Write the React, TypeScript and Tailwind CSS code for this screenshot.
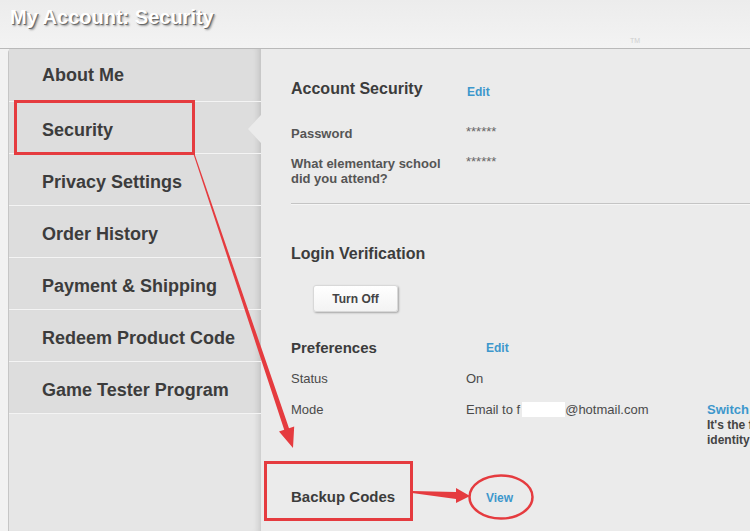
const font = "font-['Liberation_Sans',Arial,sans-serif]";

const menu = [
  "About Me",
  "Security",
  "Privacy Settings",
  "Order History",
  "Payment & Shipping",
  "Redeem Product Code",
  "Game Tester Program",
];

const Annotations = () => (
  <svg className="pointer-events-none absolute inset-0" width="750" height="531" viewBox="0 0 750 531">
    <g fill="none" stroke="#e53b3f" strokeWidth="3">
      <rect x="15.5" y="101.5" width="178" height="52" />
      <rect x="265.5" y="462.5" width="146" height="57" />
    </g>
    <ellipse cx="501" cy="497" rx="31.5" ry="21.5" fill="none" stroke="#e53b3f" strokeWidth="2.5" />
    <polygon
      fill="#e53b3f"
      points="194.5,153.8 289,428.2 294.2,426.4 293,448 279,431.6 284.2,429.8 193.5,154.2"
    />
    <polygon fill="#e53b3f" points="412,491 456,492 456,488 470,496 456,503 456,499 412,493" />
  </svg>
);

const App = () => {
  return (
    <div className={`${font} relative w-[750px] h-[531px] overflow-hidden bg-[#f2f2f2]`}>
      {/* header */}
      <div className="relative h-[48px] bg-gradient-to-b from-[#ececec] to-[#f3f3f3]">
        <h1 className="pl-[10px] pt-[5px] text-[20px] font-bold leading-[24px] text-white [text-shadow:1px_1px_0_#6b6b6b,2px_2px_2px_#9a9a9a]">
          My Account: Security
        </h1>
        <span className="absolute left-[630px] top-[36px] text-[7px] text-[#cfcfcf]">TM</span>
      </div>

      <div className="flex h-[483px] border-t border-[#b9b9b9]">
        {/* sidebar */}
        <div className="ml-[8px] flex w-[253px] shrink-0 flex-col rounded-tl-[4px] border-l border-[#c6c6c6] bg-[#e6e6e6] shadow-[inset_-7px_0_6px_-5px_rgba(0,0,0,0.14)]">
          {menu.map((item, i) => (
            <div
              key={item}
              className={`relative flex items-center whitespace-nowrap border-b border-[#f4f4f4] bg-[#dddddd] pl-[33px] text-[18px] font-bold text-[#3c3c3c] shadow-[inset_-7px_0_6px_-5px_rgba(0,0,0,0.14)] ${
                i === 0 ? "h-[53px]" : "h-[52px] pt-[6px]"
              }`}
            >
              {item}
              {item === "Security" && (
                <span className="absolute right-0 top-[13px] h-0 w-0 border-y-[14px] border-r-[13px] border-y-transparent border-r-[#ebebeb]" />
              )}
            </div>
          ))}
        </div>

        {/* main */}
        <div className="min-w-0 flex-1 bg-[#ebebeb] pl-[30px] pt-[28px] text-[#3c3c3c]">
          <div className="flex items-center">
            <h2 className="w-[176px] text-[16px] font-bold leading-[20px]">Account Security</h2>
            <span className="mt-[6px] text-[12px] font-bold text-[#3d97cc]">Edit</span>
          </div>

          <div className="mt-[25px] flex text-[13px] leading-[16px]">
            <span className="w-[175px] font-bold text-[#555]">Password</span>
            <span className="-mt-[2px] text-[#666]">******</span>
          </div>
          <div className="mt-[14px] flex text-[13px] leading-[15px]">
            <span className="w-[175px] font-bold text-[#555]">
              What elementary school
              <br />
              did you attend?
            </span>
            <span className="-mt-[2px] text-[#666]">******</span>
          </div>

          <div className="mt-[17px] border-t border-[#c4c4c4] border-b border-b-[#f5f5f5]" />

          <h2 className="mt-[39px] text-[16px] font-bold leading-[20px]">Login Verification</h2>

          <button className="ml-[22px] mt-[21px] block h-[27px] w-[85px] rounded-[3px] border border-[#d8d8d8] bg-gradient-to-b from-white to-[#f3f3f3] text-[12px] font-bold text-[#444] shadow-[1px_1px_2px_rgba(0,0,0,0.3)]">
            Turn Off
          </button>

          <div className="mt-[27px] flex items-center">
            <h3 className="w-[195px] text-[15px] font-bold leading-[18px]">Preferences</h3>
            <span className="text-[12px] font-bold text-[#3d97cc]">Edit</span>
          </div>

          <div className="mt-[14px] flex text-[13px] leading-[16px] text-[#4a4a4a]">
            <span className="w-[175px]">Status</span>
            <span>On</span>
          </div>
          <div className="mt-[15px] flex text-[13px] leading-[16px] text-[#4a4a4a]">
            <span className="w-[175px] shrink-0">Mode</span>
            <span className="flex w-[241px] shrink-0 items-start whitespace-nowrap">
              Email to f
              <span className="ml-[2px] inline-block h-[15px] w-[43px] bg-white" />
              @hotmail.com
            </span>
            <span className="whitespace-nowrap">
              <span className="block font-bold text-[#3d97cc]">Switch</span>
              <span className="block text-[12px] font-bold leading-[15px] text-[#444]">
                It's the fastest way to verify your
                <br />
                identity
              </span>
            </span>
          </div>

          <div className="mt-[38px] flex items-center">
            <h3 className="w-[195px] text-[15px] font-bold leading-[18px]">Backup Codes</h3>
            <span className="mt-[3px] text-[12px] font-bold text-[#3d97cc]">View</span>
          </div>
        </div>
      </div>

      <Annotations />
    </div>
  );
};

export default App;
